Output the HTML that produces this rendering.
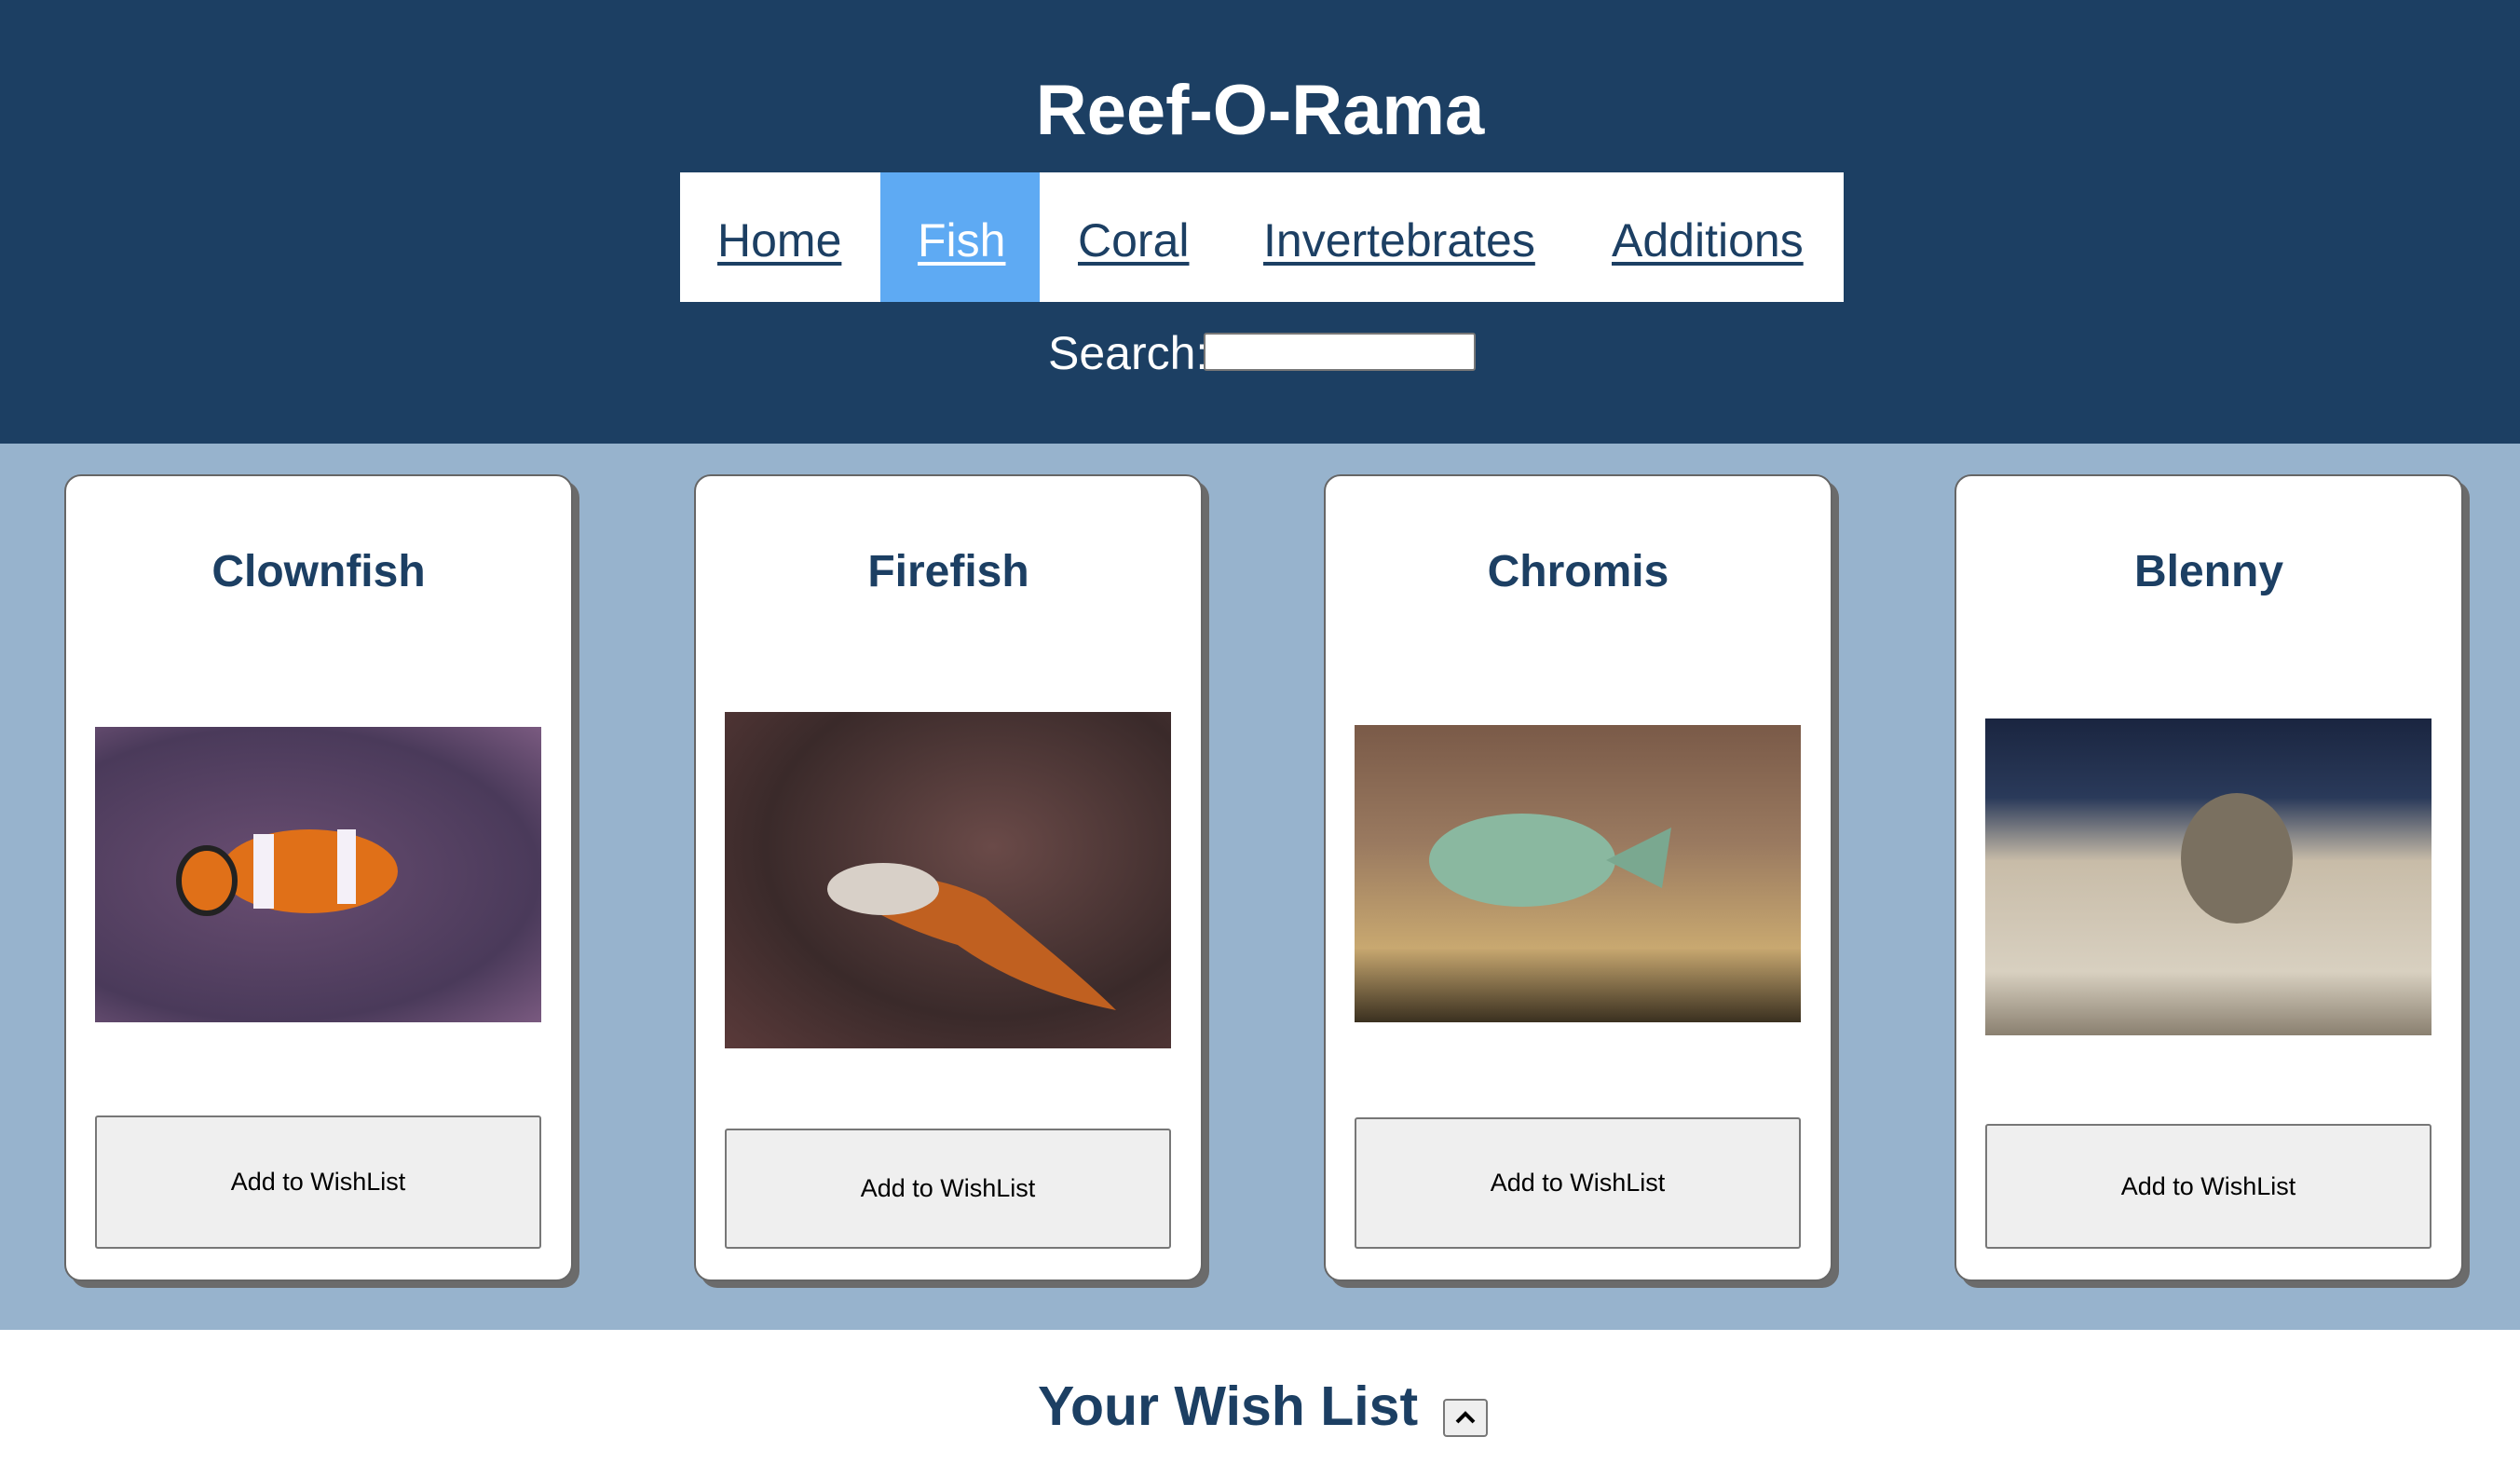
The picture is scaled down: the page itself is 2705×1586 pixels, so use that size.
<!DOCTYPE html>
<html><head><meta charset="utf-8"><style>
*{margin:0;padding:0;box-sizing:border-box}
body{width:2705px;height:1586px;overflow:hidden;font-family:"Liberation Sans",sans-serif;background:#fff;position:relative}
.hdr{position:absolute;left:0;top:0;width:2705px;height:476px;background:#1c3f63}
h1{position:absolute;left:0;width:2705px;top:75px;text-align:center;color:#fff;font-size:76px;font-weight:bold}
.nav{position:absolute;left:730px;top:185px;width:1249px;height:139px;background:#fff}
.nav a{position:absolute;top:44px;font-size:50px;color:#1c3f63;text-decoration:underline;text-decoration-thickness:4px;text-underline-offset:6px}
.fish{position:absolute;left:945px;top:185px;width:171px;height:139px;background:#5eaaf3}
.search{position:absolute;left:1125px;top:350px;color:#fff;font-size:50px}
.inp{position:absolute;left:1292px;top:357px;width:292px;height:41px;background:#fff;border:2px solid #777;border-radius:3px}
.main{position:absolute;left:0;top:476px;width:2705px;height:951px;background:#97b3cd}
.card{position:absolute;top:509px;width:546px;height:866px;background:#fff;border:2px solid #666;border-radius:18px;box-shadow:7px 7px 0 #6b6b6b}
.card h2{position:absolute;left:0;width:100%;top:75px;text-align:center;color:#1c3f63;font-size:48px}
.img{position:absolute;left:31px;width:479px}
.btn{position:absolute;left:31px;width:479px;bottom:33px;background:#efefef;border:2px solid #777;border-radius:3px;font-size:27px;text-align:center;display:flex;align-items:center;justify-content:center;color:#000}
.wl{position:absolute;left:1114px;top:1475px;color:#1c3f63;font-size:59px;font-weight:bold}
.up{position:absolute;left:1549px;top:1501px;width:48px;height:41px;background:#efefef;border:2px solid #777;border-radius:4px}
</style></head><body>
<div class="hdr"></div>
<h1>Reef-O-Rama</h1>
<div class="nav"></div>
<div class="fish"></div>
<div class="nav" style="background:none">
<a style="left:40px">Home</a><a style="left:255px;color:#fff">Fish</a><a style="left:427px">Coral</a><a style="left:626px">Invertebrates</a><a style="left:1000px">Additions</a>
</div>
<div class="search">Search:</div><div class="inp"></div>
<div class="main"></div>

<div class="card" style="left:69px"><h2>Clownfish</h2>
<div class="img" style="top:269px;height:317px;background:radial-gradient(ellipse at 40% 50%,#6a4e72,#4a3a5a 70%,#7a5a80)">
<svg width="479" height="317"><ellipse cx="230" cy="155" rx="95" ry="45" fill="#e07018"/><rect x="170" y="115" width="22" height="80" fill="#f4f0f8"/><rect x="260" y="110" width="20" height="80" fill="#f4f0f8"/><ellipse cx="120" cy="165" rx="30" ry="35" fill="#e07018" stroke="#222" stroke-width="6"/></svg></div>
<div class="btn" style="height:143px">Add to WishList</div></div>

<div class="card" style="left:745px"><h2>Firefish</h2>
<div class="img" style="top:253px;height:361px;background:radial-gradient(ellipse at 60% 40%,#6a4a48,#3a2a2a 60%,#5a3a3a)">
<svg width="479" height="361"><path d="M120 190 Q200 160 280 200 Q380 280 420 320 Q320 300 250 250 Q180 230 120 190Z" fill="#c06020"/><ellipse cx="170" cy="190" rx="60" ry="28" fill="#d8d0c8"/></svg></div>
<div class="btn" style="height:129px">Add to WishList</div></div>

<div class="card" style="left:1421px"><h2>Chromis</h2>
<div class="img" style="top:267px;height:319px;background:linear-gradient(180deg,#7a5a48,#9a7a60 40%,#c8a870 75%,#3a3020)">
<svg width="479" height="319"><ellipse cx="180" cy="145" rx="100" ry="50" fill="#8ab8a0"/><path d="M270 145 L340 110 L330 175Z" fill="#7aa890"/></svg></div>
<div class="btn" style="height:141px">Add to WishList</div></div>

<div class="card" style="left:2098px"><h2>Blenny</h2>
<div class="img" style="top:260px;height:340px;background:linear-gradient(180deg,#1a2540,#2a3a5a 25%,#c8bca8 45%,#d8d0c0 80%,#8a8070)">
<svg width="479" height="340"><ellipse cx="270" cy="150" rx="60" ry="70" fill="#7a7060"/></svg></div>
<div class="btn" style="height:134px">Add to WishList</div></div>

<div class="wl">Your Wish List</div>
<div class="up"><svg width="44" height="37"><path d="M13 23 L22 14 L31 23" fill="none" stroke="#000" stroke-width="4"/></svg></div>
</body></html>
